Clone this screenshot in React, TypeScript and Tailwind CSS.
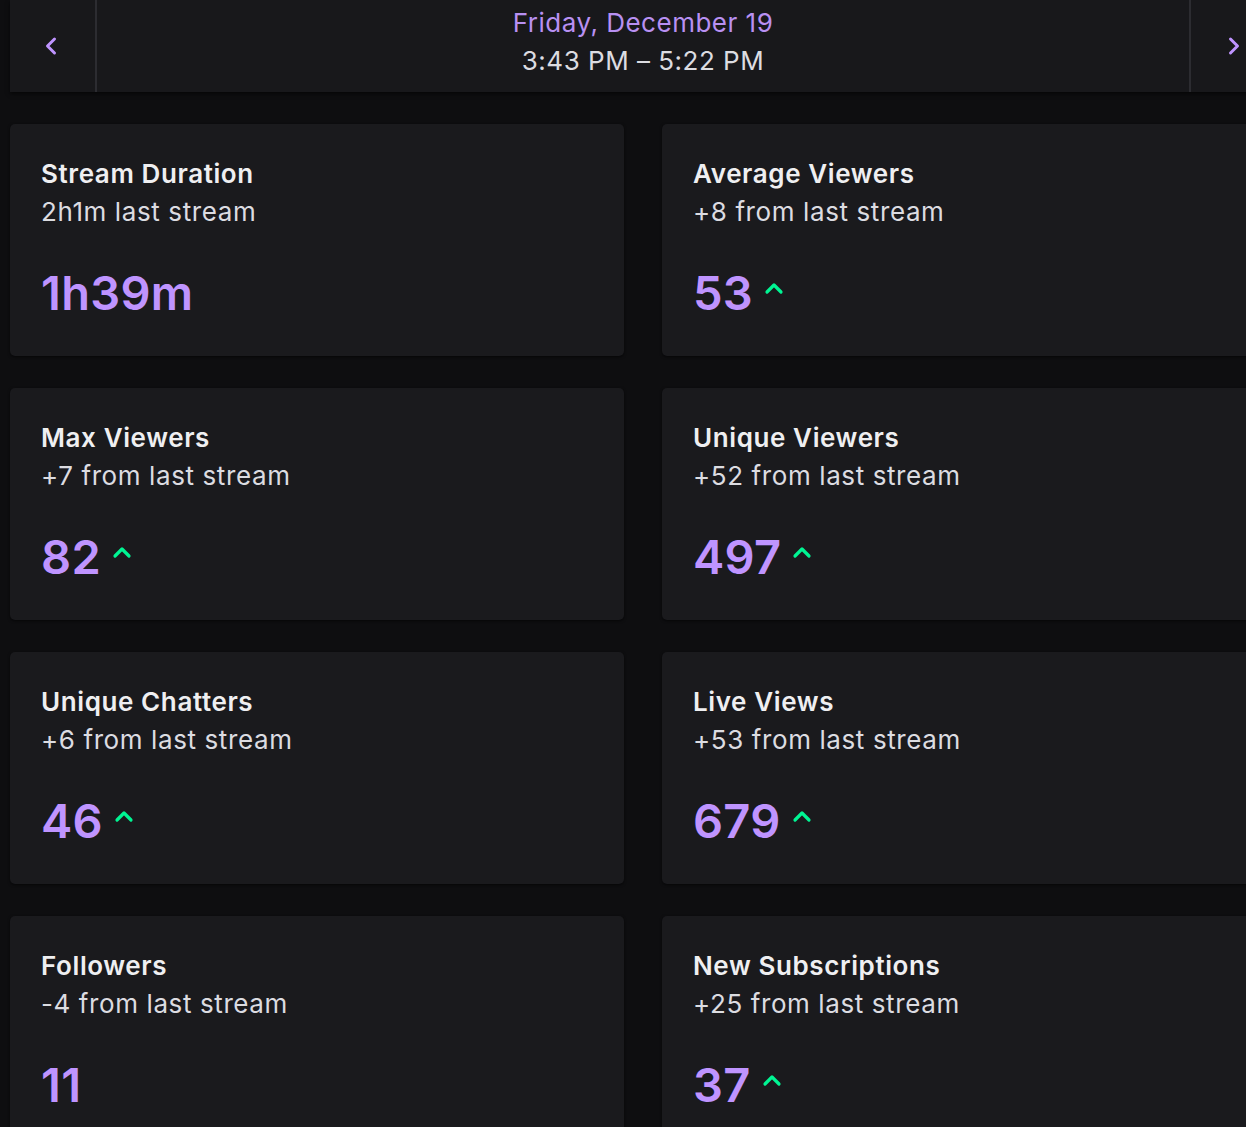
type Stat = {
  title: string;
  sub: string;
  value: string;
  up?: boolean;
};

const stats: Stat[] = [
  { title: "Stream Duration", sub: "2h1m last stream", value: "1h39m" },
  { title: "Average Viewers", sub: "+8 from last stream", value: "53", up: true },
  { title: "Max Viewers", sub: "+7 from last stream", value: "82", up: true },
  { title: "Unique Viewers", sub: "+52 from last stream", value: "497", up: true },
  { title: "Unique Chatters", sub: "+6 from last stream", value: "46", up: true },
  { title: "Live Views", sub: "+53 from last stream", value: "679", up: true },
  { title: "Followers", sub: "-4 from last stream", value: "11" },
  { title: "New Subscriptions", sub: "+25 from last stream", value: "37", up: true },
];

function Chevron({ dir }: { dir: "left" | "right" }) {
  return (
    <svg width="14" height="20" viewBox="0 0 14 20" className="text-[#bf94ff]">
      <polyline
        points={dir === "left" ? "10.5,3 3.5,10 10.5,17" : "3.5,3 10.5,10 3.5,17"}
        fill="none"
        stroke="currentColor"
        strokeWidth="3"
        strokeLinecap="round"
        strokeLinejoin="round"
      />
    </svg>
  );
}

function UpArrow() {
  return (
    <svg width="20" height="14" viewBox="0 0 20 14" className="text-[#00f593]">
      <polyline
        points="3,11 10,4 17,11"
        fill="none"
        stroke="currentColor"
        strokeWidth="3.2"
        strokeLinecap="round"
        strokeLinejoin="round"
      />
    </svg>
  );
}

function StatCard({ stat }: { stat: Stat }) {
  return (
    <div className="h-[232px] rounded-[5px] bg-[#1a1a1d] px-[31px] pt-[31px] shadow-[0_1px_3px_rgba(0,0,0,0.6)]">
      <div className="text-[26px] leading-[38px] font-semibold tracking-[0.6px] text-[#efeff1]">
        {stat.title}
      </div>
      <div className="text-[26px] leading-[38px] tracking-[0.6px] text-[#dcdce1]">
        {stat.sub}
      </div>
      {/* value + trend */}
      <div className="mt-[38px] flex items-center">
        <span className="text-[47px] leading-[48px] font-semibold tracking-[0.3px] text-[#bf94ff]">
          {stat.value}
        </span>
        {stat.up && (
          <span className="ml-[11px] -mt-[10px]">
            <UpArrow />
          </span>
        )}
      </div>
    </div>
  );
}

export default function App() {
  return (
    <div className="h-[1127px] w-[1246px] overflow-hidden bg-[#0e0e10] font-['Inter','Liberation_Sans',sans-serif]">
      <div className="ml-[10px] w-[1266px]">
        {/* Header */}
        <div className="flex h-[92px] bg-[#18181b] shadow-[0_2px_4px_rgba(0,0,0,0.6)]">
          <div className="flex w-[85px] items-center justify-center pr-[3px]">
            <Chevron dir="left" />
          </div>
          <div className="w-[2px] bg-[#2c2c31]" />
          <div className="flex flex-1 flex-col items-center pt-[4px] tracking-[0.5px]">
            <div className="text-[26px] leading-[38px] text-[#b890f2]">
              Friday, December 19
            </div>
            <div className="text-[26px] leading-[38px] text-[#dcdce1]">
              3:43 PM – 5:22 PM
            </div>
          </div>
          <div className="w-[2px] bg-[#2c2c31]" />
          <div className="flex w-[85px] items-center justify-center">
            <Chevron dir="right" />
          </div>
        </div>

        {/* Stats grid */}
        <div className="mt-[32px] grid grid-cols-2 gap-x-[38px] gap-y-[32px]">
          {stats.map((s) => (
            <StatCard key={s.title} stat={s} />
          ))}
        </div>
      </div>
    </div>
  );
}
